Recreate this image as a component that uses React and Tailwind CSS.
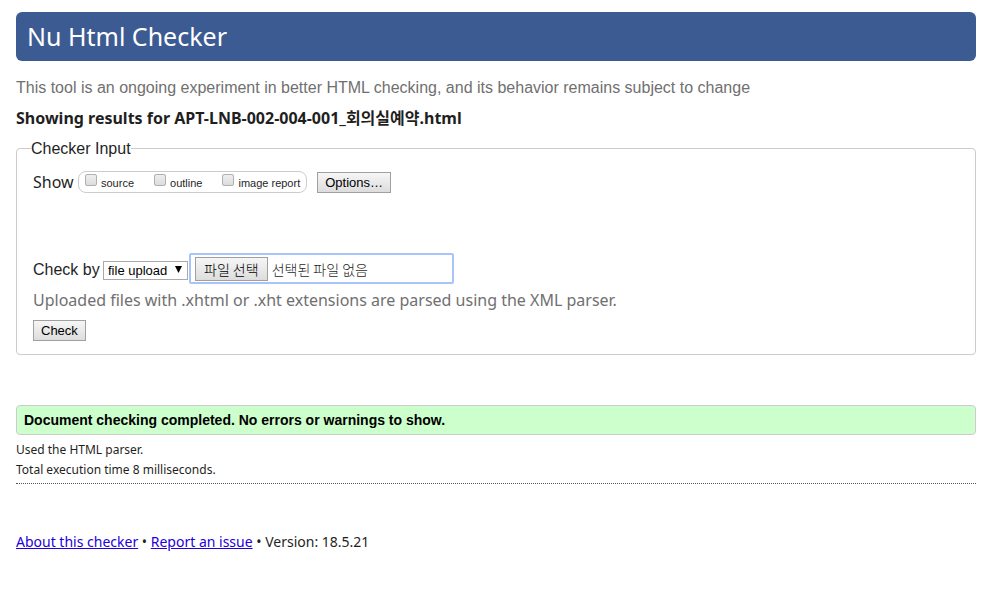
import React from 'react';

const shows = [
  { id: 'source', label: 'source' },
  { id: 'outline', label: 'outline' },
  { id: 'imagereport', label: 'image report' },
];

const buttonClass =
  'border border-[#a0a0a0] bg-linear-to-b from-[#f6f6f6] to-[#dddddd] text-black';

export default function App() {
  return (
    <div className="min-h-screen bg-white pt-3 pr-[13px] pb-14 pl-4 font-['Noto_Sans','Noto_Sans_CJK_KR',sans-serif] text-base text-[#1f1f1f]">
      <h1 className="rounded-md bg-[#3c5b92] px-[11px] py-2 text-[25px] leading-[33px] text-white">
        Nu Html Checker
      </h1>
      <p className="mt-[15px] font-['Liberation_Sans',sans-serif] leading-6 text-[#707070]">
        This tool is an ongoing experiment in better HTML checking, and its behavior remains subject to change
      </p>
      <h2 className="mt-[6px] leading-6 font-bold">
        Showing results for APT-LNB-002-004-001_회의실예약.html
      </h2>

      <form onSubmit={(e) => e.preventDefault()}>
        <fieldset className="mt-[7px] rounded border border-[#cccccc] px-4 pb-[13px]">
          <legend className="-ml-[2px] pt-[2px] font-['Liberation_Sans',sans-serif] leading-5">Checker Input</legend>

          <div className="mt-[11px] flex items-center">
            <span className="w-[45px] leading-6">Show</span>
            <div className="flex h-[22px] items-center gap-5 rounded-lg border border-[#cccccc] px-[6px] font-['Liberation_Sans',sans-serif] text-[11px] leading-4">
              {shows.map((s) => (
                <div key={s.id} className="flex items-center gap-1">
                  <input
                    id={s.id}
                    type="checkbox"
                    className="mb-1 size-3 appearance-none rounded-xs border border-[#b0b0b0] bg-linear-to-b from-[#eeeeee] to-[#dcdcdc] checked:bg-[#777777]"
                  />
                  <label htmlFor={s.id} className="pt-[2px]">{s.label}</label>
                </div>
              ))}
            </div>
            <button
              type="button"
              className={`ml-[10px] h-[21px] px-[7px] font-['Liberation_Sans',sans-serif] text-[13px] ${buttonClass}`}
            >
              Options…
            </button>
          </div>

          <div className="mt-[59px] flex items-center">
            <div className="flex items-center pt-[2px]">
              <label htmlFor="docselect" className="w-[70px] font-['Liberation_Sans',sans-serif] leading-6">
                Check by
              </label>
              <div className="relative pt-[2px]">
                <select
                  id="docselect"
                  defaultValue="file"
                  className="block h-[19px] w-[85px] appearance-none border border-[#a9a9a9] bg-white pl-1 font-['Liberation_Sans',sans-serif] text-[13px] leading-4 text-black"
                >
                  <option value="address">address</option>
                  <option value="file">file upload</option>
                  <option value="textarea">text input</option>
                </select>
                <svg className="pointer-events-none absolute top-[7px] right-[6px]" width="7" height="7" viewBox="0 0 7 7">
                  <path d="M0 0H7L3.5 7Z" fill="#000" />
                </svg>
              </div>
            </div>
            <div className="ml-px flex h-[31px] w-[265px] items-center gap-1 rounded-xs border-2 border-[#a9c4fb] px-1 text-sm font-light">
              <label
                htmlFor="doc"
                className={`flex h-6 items-center px-2 font-['Noto_Sans_CJK_KR',sans-serif] leading-5 ${buttonClass}`}
              >
                파일 선택
              </label>
              <span className="font-['Noto_Sans_CJK_KR',sans-serif] leading-5">선택된 파일 없음</span>
              <input id="doc" type="file" className="sr-only" />
            </div>
          </div>

          <p className="mt-1 leading-6 text-[#707070]">
            Uploaded files with .xhtml or .xht extensions are parsed using the XML parser.
          </p>
          <button
            type="submit"
            className={`mt-2 block h-[21px] px-[7px] font-['Liberation_Sans',sans-serif] text-[13px] ${buttonClass}`}
          >
            Check
          </button>
        </fieldset>
      </form>

      <p className="mt-[50px] rounded border border-[#cccccc] bg-[#ccffcc] px-[7px] py-1 font-['Liberation_Sans',sans-serif] text-sm leading-5 font-bold text-black">
        Document checking completed. No errors or warnings to show.
      </p>
      <div className="mt-[5px] border-b border-dotted border-[#555555] pb-[3px] text-xs leading-5">
        <p>Used the HTML parser.</p>
        <p>Total execution time 8 milliseconds.</p>
      </div>

      <footer className="mt-12 text-sm leading-5">
        <a href="#about" className="text-[#2200dd] underline">About this checker</a>
        {' • '}
        <a href="#issue" className="text-[#2200dd] underline">Report an issue</a>
        {' • Version: 18.5.21'}
      </footer>
    </div>
  );
}
